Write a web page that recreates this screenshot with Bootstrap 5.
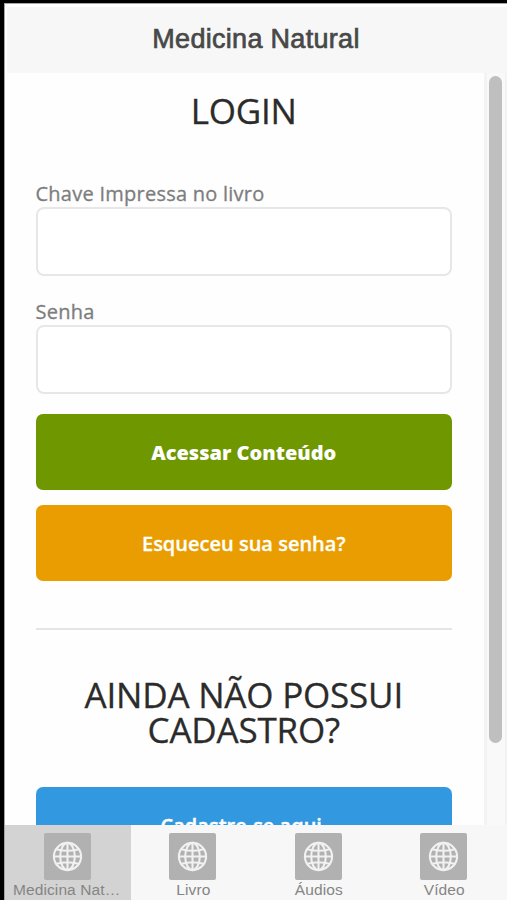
<!DOCTYPE html>
<html lang="pt-BR">
<head>
<meta charset="utf-8">
<meta name="viewport" content="width=device-width, initial-scale=1">
<title>Medicina Natural</title>
<link href="https://cdn.jsdelivr.net/npm/bootstrap@5.3.0/dist/css/bootstrap.min.css" rel="stylesheet">
<style>
  body { font-family: "Open Sans", sans-serif; color: #2b2b2b; }
  .app-frame { height: 900px; border-left: 4px solid #000; border-top: 3px solid #000; }
  .app-screen { border-left: 1px solid #a5a5a5; border-top: 1px solid #a5a5a5; min-height: 0; }
  .app-header { height: 66px; flex: none; margin: 3px 0 0 2px; background: #f7f7f7; }
  .app-title { font: 400 27px/1 "Liberation Sans", sans-serif; letter-spacing: .3px; -webkit-text-stroke: .7px #484848; color: #484848; padding: 0 2px 2px 0; }
  .app-scroll { min-height: 0; }
  .app-page { padding: 0 32px 0 30.5px; background: #fefefe; }
  .app-heading { font-size: 35px; line-height: 35px; font-weight: 400; letter-spacing: -.2px; -webkit-text-stroke: .3px #2b2b2b; }
  .login-heading { margin: 20px 0 52px; }
  .signup-heading { margin: 47px 0 40px; }
  .field-label { font-size: 20px; line-height: 27px; letter-spacing: .25px; -webkit-text-stroke: .3px #7d7d7d; color: #7d7d7d; }
  .field-input { height: 69px; border: 2px solid #e7e7e7; border-radius: 8px; }
  .field-gap { margin-bottom: 22px; }
  .app-btn { height: 76px; border: 0; border-radius: 7px; padding-top: 8px; font-size: 20px; font-weight: 600; color: #fff; flex: none; }
  .btn-access { background: #6f9800; font-weight: 800; margin-bottom: 15px; }
  .btn-forgot { background: #e99d00; -webkit-text-stroke: .3px #fff; }
  .btn-signup { background: #3298df; padding-right: 17px; -webkit-text-stroke: .4px #fff; }
  .app-rule { height: 2px; margin-top: 47px; background: #e5e5e5; }
  .scroll-track { width: 23px; background: #f9f9f9; border-left: 3px solid #f3f3f3; border-right: 2px solid #f3f3f3; padding: 3px 0 0 2px; }
  .scroll-thumb { width: 13px; height: 667px; background: #bfbfbf; }
  .tab-bar { height: 75px; background: #f7f7f7; flex: none; }
  .tab-item { width: 125.6px; padding: 8px 8px 0; color: #858585; font: 15.5px/20px "Liberation Sans", sans-serif; letter-spacing: .1px; }
  .tab-active { background: #d3d3d3; }
  .tab-icon { width: 47px; height: 47px; margin-right: 1px; }
</style>
<script src="https://cdn.jsdelivr.net/npm/bootstrap@5.3.0/dist/js/bootstrap.bundle.min.js"></script>
</head>
<body class="m-0 bg-white overflow-hidden">
<svg width="0" height="0" class="d-none">
  <symbol id="globe" viewBox="0 0 47 47">
    <rect width="47" height="47" rx="2" fill="#b1b1b1"/>
    <g fill="none" stroke="#f1f1f1" stroke-width="2.1">
      <circle cx="23.5" cy="23.5" r="13.6"/>
      <ellipse cx="23.5" cy="23.5" rx="7.3" ry="13.6"/>
      <path d="M23.5 10v27M10 23.5h27M12.5 16.2q11 3.2 22 0M12.5 30.8q11-3.2 22 0"/>
    </g>
  </symbol>
</svg>
<div class="app-frame d-flex">
  <div class="app-screen d-flex flex-column flex-grow-1 w-100">
    <header class="app-header d-flex align-items-center justify-content-center">
      <h1 class="app-title m-0">Medicina Natural</h1>
    </header>
    <div class="app-scroll d-flex flex-grow-1 overflow-hidden">
      <main class="app-page flex-grow-1 d-flex flex-column overflow-hidden">
        <h2 class="app-heading login-heading text-center">LOGIN</h2>
        <label class="field-label" for="chave">Chave Impressa no livro</label>
        <input class="form-control field-input field-gap flex-shrink-0" id="chave" type="text">
        <label class="field-label" for="senha">Senha</label>
        <input class="form-control field-input flex-shrink-0 mb-3" id="senha" type="password">
        <button class="btn app-btn btn-access mt-1" type="button">Acessar Conteúdo</button>
        <button class="btn app-btn btn-forgot" type="button">Esqueceu sua senha?</button>
        <div class="app-rule flex-shrink-0"></div>
        <h2 class="app-heading signup-heading text-center">AINDA NÃO POSSUI<br>CADASTRO?</h2>
        <button class="btn app-btn btn-signup" type="button">Cadastre-se aqui</button>
      </main>
      <div class="scroll-track flex-shrink-0"><div class="scroll-thumb rounded-pill"></div></div>
    </div>
    <nav class="tab-bar d-flex">
      <div class="tab-item tab-active d-flex flex-column align-items-center"><svg class="tab-icon flex-shrink-0"><use href="#globe"/></svg><span class="text-truncate mw-100">Medicina Natural</span></div>
      <div class="tab-item d-flex flex-column align-items-center"><svg class="tab-icon flex-shrink-0"><use href="#globe"/></svg><span>Livro</span></div>
      <div class="tab-item d-flex flex-column align-items-center"><svg class="tab-icon flex-shrink-0"><use href="#globe"/></svg><span>Áudios</span></div>
      <div class="tab-item d-flex flex-column align-items-center"><svg class="tab-icon flex-shrink-0"><use href="#globe"/></svg><span>Vídeo</span></div>
    </nav>
  </div>
</div>
</body>
</html>
